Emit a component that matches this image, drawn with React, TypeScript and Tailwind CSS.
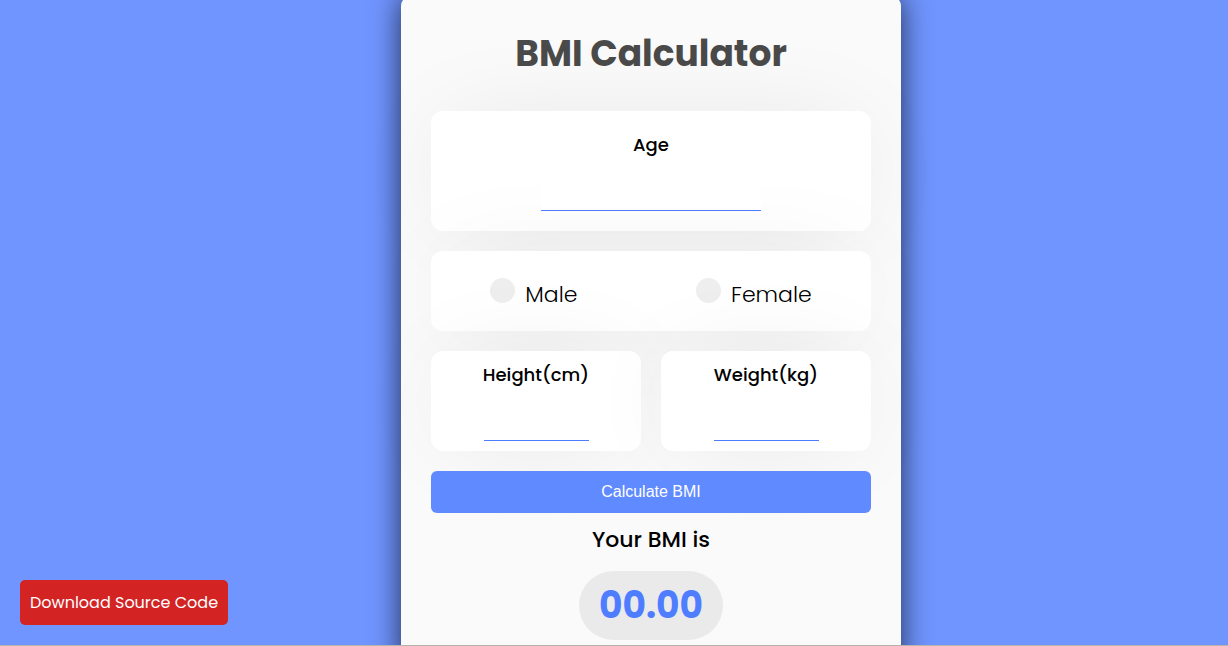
import { useState, type FormEvent } from "react";

const panel = "rounded-[12px] bg-white shadow-[0_0_100px_-20px_rgba(0,0,0,0.1)]";
const field =
  "w-1/2 border-b border-[#4f7dff] bg-white text-center text-[18px] outline-none";

function MeasureField({ id, label }: { id: string; label: string }) {
  return (
    <div className={`flex h-[100px] flex-1 flex-col items-center pt-[10px] pb-[10px] ${panel}`}>
      <label htmlFor={id} className="text-[18px] leading-[27px] font-medium">
        {label}
      </label>
      <input id={id} name={id} type="text" className={`mt-auto h-8 ${field}`} />
    </div>
  );
}

function GenderOption({ value, label }: { value: string; label: string }) {
  return (
    <label className="flex items-start gap-[10px] text-[22px] leading-[33px] font-light">
      <input
        type="radio"
        name="gender"
        value={value}
        className="size-[25px] appearance-none rounded-full bg-[#eeeeee] checked:bg-[#4f7dff]"
      />
      <span>{label}</span>
    </label>
  );
}

export default function App() {
  const [bmi, setBmi] = useState("00.00");

  function calculate(event: FormEvent<HTMLFormElement>) {
    event.preventDefault();
    const data = new FormData(event.currentTarget);
    const height = Number(data.get("height")) / 100;
    const weight = Number(data.get("weight"));
    if (height > 0 && weight > 0) setBmi((weight / (height * height)).toFixed(2));
  }

  return (
    <div className="flex h-screen flex-col bg-[#7095ff] font-['Poppins','Inter',sans-serif] text-black">
      <main className="flex min-h-0 flex-1 items-start justify-center overflow-hidden pl-[74px]">
        <form
          onSubmit={calculate}
          className="-mt-1 flex w-full max-w-[500px] shrink-0 flex-col rounded-[10px] bg-[#fafafa] p-[30px] shadow-[0_0_30px_rgba(0,0,0,0.7)]"
        >
          <h1 className="mb-[29px] text-center text-[36px] leading-[56px] font-bold text-[#4a4a4a]">
            BMI Calculator
          </h1>

          <div className="flex flex-col gap-5">
            <div className={`flex h-[120px] flex-col items-center pt-5 pb-5 ${panel}`}>
              <label htmlFor="age" className="text-[18px] leading-[27px] font-medium">
                Age
              </label>
              <input id="age" name="age" type="text" className={`relative mt-auto h-8 ${field}`} />
            </div>

            <div className={`flex h-20 justify-around pt-[27px] ${panel}`}>
              <GenderOption value="male" label="Male" />
              <GenderOption value="female" label="Female" />
            </div>

            <div className="flex gap-5">
              <MeasureField id="height" label="Height(cm)" />
              <MeasureField id="weight" label="Weight(kg)" />
            </div>

            <button
              type="submit"
              className="relative h-[42px] rounded-[6px] bg-[#608aff] font-['Liberation_Sans',Arial,sans-serif] text-[16px] text-white"
            >
              Calculate BMI
            </button>
          </div>

          <p className="mt-[10px] mb-[15px] text-center text-[22px] leading-[33px] font-medium">
            Your BMI is
          </p>
          <output className="self-center rounded-full bg-[#eaeaea] px-5 pt-[7px] pb-[6px] text-[36px] leading-[56px] font-bold text-[#4f7dff]">
            {bmi}
          </output>
        </form>
      </main>

      <div className="h-px shrink-0 bg-[#b9b3a9]" />

      <a
        href="#source"
        className="fixed bottom-[21px] left-5 rounded-[5px] bg-[#d32323] p-[10px] text-[16px] leading-[25px] text-white"
      >
        Download Source Code
      </a>
    </div>
  );
}
